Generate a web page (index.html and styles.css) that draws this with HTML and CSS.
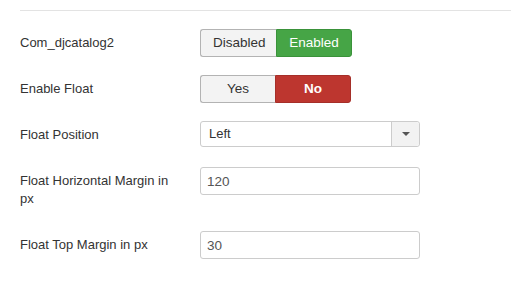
FILE: index.html
```html
<!DOCTYPE html>
<html>
<head>
<meta charset="utf-8">
<link rel="stylesheet" href="styles.css">
</head>
<body>
<div class="page">
  <hr class="rule">
  <div class="group">
    <label class="label">Com_djcatalog2</label>
    <div class="controls">
      <div class="btn-group">
        <span class="btn">Disabled</span><span class="btn btn-success">Enabled</span>
      </div>
    </div>
  </div>
  <div class="group">
    <label class="label">Enable Float</label>
    <div class="controls">
      <div class="btn-group">
        <span class="btn btn-yes">Yes</span><span class="btn btn-danger">No</span>
      </div>
    </div>
  </div>
  <div class="group">
    <label class="label">Float Position</label>
    <div class="controls">
      <div class="select">
        <span class="select-value">Left</span>
        <span class="select-arrow"><svg width="8" height="4" viewBox="0 0 8 4"><path d="M0 0H8L4 4Z" fill="#555"/></svg></span>
      </div>
    </div>
  </div>
  <div class="group">
    <label class="label">Float Horizontal Margin in px</label>
    <div class="controls">
      <input class="input" type="text" value="120">
    </div>
  </div>
  <div class="group">
    <label class="label">Float Top Margin in px</label>
    <div class="controls">
      <input class="input" type="text" value="30">
    </div>
  </div>
</div>
</body>
</html>
```
FILE: styles.css
```css
html, body {
  margin: 0;
  padding: 0;
  background: #fff;
}
body {
  font-family: "Liberation Sans", Arial, sans-serif;
  font-size: 13px;
  line-height: 18px;
  color: #333;
}
.page {
  padding: 10px 0 0 20px;
}
.rule {
  margin: 0 0 18px 0;
  border: 0;
  border-top: 1px solid #e3e3e3;
  height: 0;
}
.group {
  display: flex;
  margin-bottom: 18px;
}
.label {
  width: 160px;
  padding-top: 5px;
  margin-bottom: 5px;
  margin-right: 20px;
  flex: none;
}
.controls {
  flex: none;
}
.btn-group {
  display: flex;
}
.btn {
  display: inline-block;
  box-sizing: border-box;
  height: 28px;
  padding: 4px 12px;
  line-height: 18px;
  font-size: 13.5px;
  color: #333;
  background: #f3f3f3;
  border: 1px solid #b3b3b3;
  text-align: center;
}
.btn:first-child {
  border-radius: 3px 0 0 3px;
  border-right: 0;
}
.btn:last-child {
  border-radius: 0 3px 3px 0;
}
.btn-group .btn:first-child { width: 76px; }
.btn-group .btn:last-child { width: 76px; }
.btn-success {
  background: #46a546;
  border-color: #3a923a;
  color: #fff;
}
.btn-danger {
  background: #bd362f;
  border-color: #a52f29;
  color: #fff;
  font-weight: bold;
}
.btn-yes { width: 75px !important; }
.select {
  display: flex;
  box-sizing: border-box;
  width: 220px;
  height: 26px;
  border: 1px solid #ccc;
  border-radius: 3px;
  margin-bottom: 2px;
  background: #fff;
}
.select-value {
  flex: 1;
  padding: 3px 8px;
  color: #333;
}
.select-arrow {
  width: 27px;
  border-left: 1px solid #ccc;
  background: #f2f2f2;
  display: flex;
  align-items: center;
  justify-content: center;
  border-radius: 0 3px 3px 0;
}
.select-arrow svg { display: block; }
.input {
  box-sizing: border-box;
  width: 220px;
  height: 28px;
  margin: 0;
  padding: 4px 6px;
  border: 1px solid #ccc;
  border-radius: 3px;
  font-family: "Liberation Sans", Arial, sans-serif;
  font-size: 13.5px;
  color: #555;
  line-height: 18px;
  outline: none;
}
```
